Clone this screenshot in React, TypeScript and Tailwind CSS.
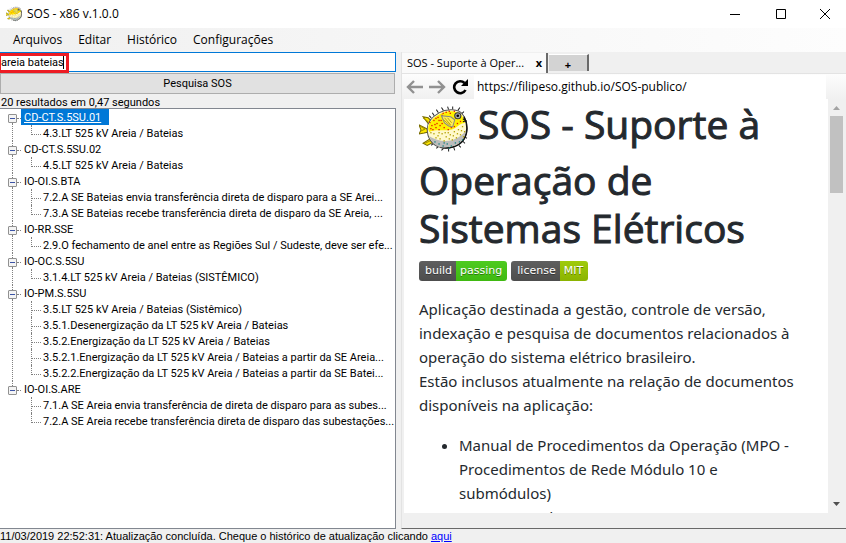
import React from "react";

type Branch = { title: string; items: string[] };

const results: Branch[] = [
  { title: "CD-CT.S.5SU.01", items: ["4.3.LT 525 kV Areia / Bateias"] },
  { title: "CD-CT.S.5SU.02", items: ["4.5.LT 525 kV Areia / Bateias"] },
  {
    title: "IO-OI.S.BTA",
    items: [
      "7.2.A SE Bateias envia transferência direta de disparo para a SE Arei...",
      "7.3.A SE Bateias recebe transferência direta de disparo da SE Areia, ...",
    ],
  },
  {
    title: "IO-RR.SSE",
    items: ["2.9.O fechamento de anel entre as Regiões Sul / Sudeste, deve ser efe..."],
  },
  { title: "IO-OC.S.5SU", items: ["3.1.4.LT 525 kV Areia / Bateias (SISTÊMICO)"] },
  {
    title: "IO-PM.S.5SU",
    items: [
      "3.5.LT 525 kV Areia / Bateias (Sistêmico)",
      "3.5.1.Desenergização da LT 525 kV Areia / Bateias",
      "3.5.2.Energização da LT 525 kV Areia / Bateias",
      "3.5.2.1.Energização da LT 525 kV Areia / Bateias a partir da SE Areia...",
      "3.5.2.2.Energização da LT 525 kV Areia / Bateias a partir da SE Batei...",
    ],
  },
  {
    title: "IO-OI.S.ARE",
    items: [
      "7.1.A SE Areia envia transferência de direta de disparo para as subes...",
      "7.2.A SE Areia recebe transferência direta de disparo das subestações...",
    ],
  },
];

const redSpots = [
  [14, 13], [18, 10], [17, 16], [22, 8], [21, 13], [12, 18], [16, 20], [20, 18], [26, 5], [25, 10],
  [30, 6], [34, 4], [10, 15], [24, 20], [31, 20], [37, 16], [28, 22], [40, 14], [13, 22], [19, 22],
  [19, 13], [15, 17], [22, 16], [29, 4], [23, 6], [34, 19], [16, 11], [11, 21],
];
const oliveSpots = [
  [14, 26], [18, 28], [22, 26], [26, 29], [30, 27], [34, 24], [38, 22], [42, 19], [44, 24], [40, 27],
  [36, 30], [20, 31], [16, 30], [24, 33], [32, 32], [43, 29], [28, 25], [11, 25], [25, 25], [33, 28],
  [37, 26], [41, 23], [29, 31], [19, 25],
];
const tealSpots = [
  [15, 34], [19, 36], [23, 38], [27, 36], [31, 38], [35, 35], [39, 34], [29, 40], [24, 35], [42, 32],
];

function Pufferfish({ className }: { className: string }) {
  return (
    <svg viewBox="0 0 48 44" className={className} aria-hidden="true">
      <path
        d="M15 9l-2-3M19 6l-2-3M24 4l-2-3M29 3l-1-3M33 3V0M38 4l2-3M42 7l2-2M45 30l2 1M43 34l2 2M39 38l2 2M34 40l1 3M29 41v3M24 41l-2 2M19 39l-2 2M14 36l-2 2M12 11l-2-2"
        stroke="#222"
        strokeWidth="1"
        fill="none"
      />
      <path d="M10 18L4 10l5 1 4 4zM8 22l-8-4 2 5-2 4 5-1 4-1zM12 31l-8 5 4 2 6-3z" fill="#ffe800" stroke="#766900" />
      <path d="M4 11l5 4M1 19l5 3M2 24l4-2M6 36l6-3" stroke="#a89500" fill="none" />
      <path
        d="M8 22c0-7 5-12 12-16C27 2 39 2 43 8c5 7 5 17 1 24-4 7-15 10-23 8C13 38 8 31 8 22z"
        fill="#fff9cc"
        stroke="#555"
        strokeWidth="1"
      />
      <path d="M44 10c4 7 4 16 0 22-4 7-15 10-23 8" fill="none" stroke="#111" strokeWidth="1.5" />
      <path d="M9 22c0-7 5-11 12-15 7-4 18-3 21 2 2 3 3 5 3 7-6 0-8 6-15 7s-14-1-20 2z" fill="#fff000" />
      <path d="M10 29c7 4 14 6 22 4 6-2 11-5 14-10-1 9-6 14-13 16-12 3-19 0-23-10z" fill="#bcbcbc" />
      {redSpots.map(([x, y]) => (
        <rect key={`r${x}-${y}`} x={x} y={y} width="1.3" height="1.3" fill="#e51c00" />
      ))}
      {oliveSpots.map(([x, y]) => (
        <rect key={`o${x}-${y}`} x={x} y={y} width="1.3" height="1.3" fill="#b3a000" />
      ))}
      {tealSpots.map(([x, y]) => (
        <rect key={`t${x}-${y}`} x={x} y={y} width="1.3" height="1.3" fill="#188080" />
      ))}
      <path d="M22 9l9 1 4 3-2 7-4-1-4-3z" fill="#ffee58" stroke="#888" strokeWidth="1" />
      <path d="M25 11l6 7M28 11l4 5M24 13l7 6" stroke="#b09a00" strokeWidth=".8" />
      <circle cx="38" cy="9" r="3" fill="#aaa" stroke="#333" />
      <circle cx="38" cy="9" r="1.3" fill="#000" />
      <path d="M43 12l3 2-3 1" fill="none" stroke="#111" />
    </svg>
  );
}

function ResultBranch({ branch, first, last }: { branch: Branch; first: boolean; last: boolean }) {
  return (
    <li className="flex">
      <div className="flex w-[9px] shrink-0 flex-col items-center">
        <span className={`h-[5px] w-px border-l border-dotted ${first ? "border-transparent" : "border-[#808080]"}`} />
        <button
          type="button"
          aria-label={`Recolher ${branch.title}`}
          className="flex h-[9px] w-[9px] shrink-0 items-center justify-center rounded-[1px] border border-[#919191] bg-[#f4f4f4]"
        >
          <span className="h-px w-[5px] bg-[#3c54a5]" />
        </button>
        {!last && <span className="w-px flex-1 border-l border-dotted border-[#808080]" />}
      </div>
      <div className="min-w-0 flex-1">
        <div className="flex h-4">
          <span className="h-[10px] w-1 shrink-0 border-b border-dotted border-[#808080]" />
          {first ? (
            <span className="bg-[#0078d7] pr-2 pl-[3px] leading-[18px] text-white underline">{branch.title}</span>
          ) : (
            <span className="pl-[3px] leading-[18px]">{branch.title}</span>
          )}
        </div>
        <ul className="pl-[14px]">
          {branch.items.map((item, i) => (
            <li key={item} className="flex h-4 whitespace-nowrap">
              <span
                className={`w-px shrink-0 border-l border-dotted border-[#808080] ${
                  i === branch.items.length - 1 ? "h-[10px]" : "h-4"
                }`}
              />
              <span className="h-[10px] w-[9px] shrink-0 border-b border-dotted border-[#808080]" />
              <span className="pl-[2px] leading-[18px]">{item}</span>
            </li>
          ))}
        </ul>
      </div>
    </li>
  );
}

function Badge({ label, value, tone }: { label: string; value: string; tone: string }) {
  return (
    <span className="flex h-5 overflow-hidden rounded-[3px] font-['DejaVu_Sans',sans-serif] text-[11px] leading-5 text-white [text-shadow:0_1px_0_#0006]">
      <span className="bg-linear-to-b from-[#5f5f5f] to-[#4d4d4d] pr-1 pl-[6px]">{label}</span>
      <span className={`bg-linear-to-b pr-[5px] pl-1 ${tone}`}>{value}</span>
    </span>
  );
}

function TitleBar() {
  return (
    <header className="flex h-7 shrink-0 items-center bg-white pl-[6px]">
      <Pufferfish className="h-4 w-4" />
      <span className="flex-1 pl-[5px] text-[12px] leading-4">SOS - x86 v.1.0.0</span>
      <button type="button" aria-label="Minimizar" className="flex h-6 w-[46px] items-center justify-center">
        <svg viewBox="0 0 10 10" className="h-[10px] w-[10px]"><path d="M0 5.5h10" stroke="#000" /></svg>
      </button>
      <button type="button" aria-label="Maximizar" className="flex h-6 w-[46px] items-center justify-center">
        <svg viewBox="0 0 10 10" className="h-[10px] w-[10px]"><path d="M.5.5h9v9h-9z" stroke="#000" fill="none" /></svg>
      </button>
      <button type="button" aria-label="Fechar" className="flex h-6 w-[42px] items-center justify-center">
        <svg viewBox="0 0 10 10" className="h-[10px] w-[10px]"><path d="M0 0l10 10M10 0L0 10" stroke="#000" /></svg>
      </button>
    </header>
  );
}

function SearchPanel() {
  return (
    <section className="flex w-[396px] shrink-0 flex-col font-[Roboto,Arial,sans-serif] text-[11px]">
      <div className="relative">
        <input
          type="text"
          aria-label="Pesquisa"
          defaultValue="areia bateias"
          className="block h-5 w-full border border-[#0078d7] bg-white outline-none"
        />
        <div className="pointer-events-none absolute top-px left-0 flex h-5 w-[69px] justify-end border-[3px] border-l border-[#ed1c24] pr-[2px]">
          <span className="h-[13px] w-px bg-black" />
        </div>
      </div>
      <button type="button" className="mt-px mr-px h-[21px] border border-[#adadad] bg-[#e1e1e1] pt-px text-center">
        Pesquisa SOS
      </button>
      <p className="h-[14px] pl-px leading-[18px]">20 resultados em 0,47 segundos</p>
      <ul className="min-h-0 flex-1 overflow-hidden border border-l-0 border-[#828790] bg-white pl-2">
        {results.map((branch, i) => (
          <ResultBranch key={branch.title} branch={branch} first={i === 0} last={i === results.length - 1} />
        ))}
      </ul>
    </section>
  );
}

function BrowserPanel() {
  return (
    <section className="ml-[5px] flex min-w-0 flex-1 flex-col border-b border-l border-b-[#696969] border-l-[#e3e3e3]">
      <div className="flex h-[21px] shrink-0 items-end text-[11px]">
        <div className="flex h-5 w-[146px] items-center border-r-2 border-[#696969] bg-[#fafafa] pl-[5px]">
          <button type="button" className="flex-1 text-left whitespace-nowrap">SOS - Suporte à Oper...</button>
          <button type="button" aria-label="Fechar guia" className="pr-1 font-bold">x</button>
        </div>
        <button
          type="button"
          aria-label="Nova guia"
          className="mb-[2px] ml-px h-[17px] w-10 border-t border-r-2 border-t-white border-r-[#696969] bg-[#d3d3d3] pt-1 font-bold leading-3"
        >
          +
        </button>
      </div>
      <div className="flex h-[26px] shrink-0 items-center border-t border-[#e3e3e3] bg-linear-to-b from-[#fdfdfd] to-[#f0f0f0] pr-5 pl-1">
        <button type="button" aria-label="Voltar" className="w-[23px]">
          <svg viewBox="0 0 17 14" className="h-[14px] w-[17px]"><path d="M8 1L2 7l6 6M2 7h15" stroke="#919191" strokeWidth="2.4" fill="none" /></svg>
        </button>
        <button type="button" aria-label="Avançar" className="w-[23px]">
          <svg viewBox="0 0 17 14" className="h-[14px] w-[17px]"><path d="M9 1l6 6-6 6M15 7H0" stroke="#919191" strokeWidth="2.4" fill="none" /></svg>
        </button>
        <button type="button" aria-label="Recarregar" className="w-[22px]">
          <svg viewBox="0 0 16 16" className="h-4 w-4">
            <path d="M12.500 4A6 6 0 1 0 13.500 11" stroke="#000" strokeWidth="2.6" fill="none" />
            <path d="M16 0v7H9z" fill="#000" />
          </svg>
        </button>
        <input
          type="text"
          aria-label="Endereço"
          defaultValue="https://filipeso.github.io/SOS-publico/"
          className="h-6 min-w-0 flex-1 bg-white pl-[3px] text-[12px] outline-none"
        />
      </div>
      <div className="mb-[15px] ml-[2px] flex min-h-0 flex-1">
        <article className="min-w-0 flex-1 overflow-hidden bg-white pr-5 pl-[15px] font-['Noto_Sans',sans-serif] text-[15px] leading-6 text-[#24292e]">
          <h1 className="pt-px font-['Open_Sans',sans-serif] text-[39px] leading-[48px] [-webkit-text-stroke:1px_#24292e]">
            <Pufferfish className="mt-1 mr-[10px] mb-1 inline-block h-[46px] w-[49px] align-middle" />
            SOS - Suporte à Operação de Sistemas Elétricos
          </h1>
          <div className="mt-[9px] flex gap-1">
            <Badge label="build" value="passing" tone="from-[#4ecb20] to-[#3fb911]" />
            <Badge label="license" value="MIT" tone="from-[#9fcb0d] to-[#8bb300]" />
          </div>
          <p className="mt-4">
            Aplicação destinada a gestão, controle de versão, indexação e pesquisa de documentos relacionados à
            operação do sistema elétrico brasileiro.
            <br />
            Estão inclusos atualmente na relação de documentos disponíveis na aplicação:
          </p>
          <ul className="mt-4 list-disc pl-10">
            <li>Manual de Procedimentos da Operação (MPO - Procedimentos de Rede Módulo 10 e submódulos)</li>
            <li>Mensagens de Operação (MOP);</li>
          </ul>
        </article>
        <div className="flex w-[18px] shrink-0 flex-col items-center bg-[#f0f0f0]">
          <svg viewBox="0 0 18 17" className="h-[17px] w-[18px] shrink-0"><path d="M5 11l3.500-4 3.500 4z" fill="#a3a3a3" /></svg>
          <div className="mr-[2px] h-[77px] w-[13px] bg-[#c1c1c1]" />
          <div className="flex-1" />
          <svg viewBox="0 0 18 17" className="h-[17px] w-[18px] shrink-0"><path d="M5 6l3.500 4L12 6z" fill="#505050" /></svg>
        </div>
      </div>
    </section>
  );
}

export default function App() {
  return (
    <div className="flex h-screen flex-col overflow-hidden bg-[#f0f0f0] font-['Open_Sans','Noto_Sans',sans-serif] text-black">
      <TitleBar />
      <nav className="flex h-6 shrink-0 items-center gap-4 bg-linear-to-r from-[#f0f0f0] to-[#fdfdfd] pl-[13px] text-[12px]">
        <button type="button">Arquivos</button>
        <button type="button">Editar</button>
        <button type="button">Histórico</button>
        <button type="button">Configurações</button>
      </nav>
      <main className="flex min-h-0 flex-1">
        <SearchPanel />
        <BrowserPanel />
      </main>
      <footer className="h-[14px] shrink-0 font-['Liberation_Sans',Arial,sans-serif] text-[11px] leading-[14px]">
        11/03/2019 22:52:31: Atualização concluída. Cheque o histórico de atualização clicando{" "}
        <a href="#atualizacao" className="text-[#0000ff] underline">aqui</a>
      </footer>
    </div>
  );
}
